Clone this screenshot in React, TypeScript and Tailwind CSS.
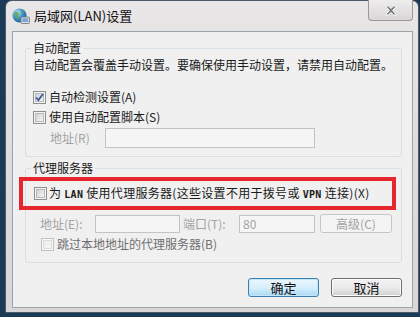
import React from "react";

function CheckBox({ checked, disabled }: { checked?: boolean; disabled?: boolean }) {
  return (
    <span
      className={`flex h-[13px] w-[13px] shrink-0 items-center justify-center border ${
        disabled ? "border-[#c2c2c2] bg-[#f7f7f7]" : "border-[#8e8f8f] bg-[#f4f4f4]"
      }`}
    >
      <span
        className={`flex h-[9px] w-[9px] items-center justify-center border bg-gradient-to-br ${
          disabled
            ? "border-[#dcdcdc] from-[#ebebeb] to-[#f7f7f7]"
            : "border-[#b9b9b9] from-[#d2d2d2] to-[#f5f5f5]"
        }`}
      >
        {checked && (
          <svg width="9" height="9" viewBox="0 0 9 9" className="overflow-visible">
            <path d="M1 4.5 L3.4 7 L8 1" fill="none" stroke="#3a5a9c" strokeWidth="1.8" />
          </svg>
        )}
      </span>
    </span>
  );
}

function Field({ w, h, value }: { w: string; h: string; value?: string }) {
  return (
    <div
      className={`${w} ${h} flex items-center border border-[#c3c3c3] bg-[#f5f5f5] pl-[3px] text-[12px] text-[#a3a3a3]`}
    >
      {value}
    </div>
  );
}

function LanIcon() {
  return (
    <svg width="18" height="17" viewBox="0 0 18 17">
      <defs>
        <radialGradient id="globe" cx="35%" cy="30%" r="75%">
          <stop offset="0%" stopColor="#bfe4f7" />
          <stop offset="55%" stopColor="#3b8ec4" />
          <stop offset="100%" stopColor="#1f5f8e" />
        </radialGradient>
      </defs>
      <circle cx="7.5" cy="7.5" r="7" fill="url(#globe)" />
      <path d="M3 4 Q6 3 7 6 Q5 8 6 11 Q3 10 2.5 7 Z" fill="#5aa543" opacity="0.85" />
      <path d="M9 2 Q12 3 12.5 5 Q10.5 5.5 9.5 4 Z" fill="#5aa543" opacity="0.85" />
      <rect x="9" y="9" width="8.5" height="6.5" rx="0.8" fill="#d9dde2" stroke="#6b7683" strokeWidth="0.8" />
      <rect x="10.3" y="10.2" width="5.9" height="3.8" fill="#7fa9cc" />
    </svg>
  );
}

export default function App() {
  return (
    <div className="h-[317px] w-[420px] overflow-hidden bg-[#1c3956] font-['Noto_Sans_CJK_SC',sans-serif] text-[12px] leading-[14px] text-[#1a1a1a]">
      {/* window */}
      <div className="ml-[5px] flex h-[313px] w-[414px] flex-col rounded-t-[7px] border border-[#4a5b6c] bg-gradient-to-b from-[#e9e6e7] via-[#e0dcdd] to-[#dad6d7]">
        {/* title bar */}
        <div className="flex h-[30px] items-center pl-[6px] pr-[5px]">
          <LanIcon />
          <span className="ml-[4px] text-[13px] text-[#111]">局域网(LAN)设置</span>
          <div className="-mt-[1px] ml-auto flex h-[21px] w-[45px] items-center justify-center self-start rounded-b-[4px] border border-t-0 border-[#9a9898] bg-gradient-to-b from-[#eeeced] to-[#d9d6d7]">
            <svg width="14" height="11" viewBox="0 0 14 11">
              <path
                d="M1.5 1 H4.5 L7 3.6 L9.5 1 H12.5 L8.6 5.5 L12.5 10 H9.5 L7 7.4 L4.5 10 H1.5 L5.4 5.5 Z"
                fill="#7a7a7a"
                stroke="#fbfbfb"
                strokeWidth="1"
                strokeLinejoin="round"
              />
            </svg>
          </div>
        </div>

        {/* client area */}
        <div className="ml-[6px] mr-[5px] flex h-[277px] flex-col border border-[#9ba3ab] bg-[#f0f0f0]">
          {/* 自动配置 */}
          <fieldset className="ml-[12px] mr-[10px] mt-[10px] rounded-[3px] border border-[#d5dfe5] px-[7px] pb-[8px]">
            <legend className="-ml-[2px] px-[2px] leading-[12px]">自动配置</legend>
            <div className="mt-[4px] whitespace-nowrap">
              自动配置会覆盖手动设置。要确保使用手动设置，请禁用自动配置。
            </div>
            <label className="mt-[18px] flex h-[14px] items-center gap-[3px]">
              <CheckBox checked />
              <span>自动检测设置(A)</span>
            </label>
            <label className="mt-[6px] flex h-[14px] items-center gap-[3px]">
              <CheckBox />
              <span>使用自动配置脚本(S)</span>
            </label>
            <div className="mt-[4px] flex h-[20px] items-center">
              <span className="ml-[17px] w-[55px] text-[#a3a3a3]">地址(R)</span>
              <Field w="w-[210px]" h="h-[20px]" />
            </div>
          </fieldset>

          {/* 代理服务器 */}
          <fieldset className="ml-[12px] mr-[10px] mt-[5px] rounded-[3px] border border-[#d5dfe5] px-[7px] pb-[11px]">
            <legend className="-ml-[2px] px-[2px] leading-[12px]">代理服务器</legend>
            <label className="-ml-[14px] -mr-[2px] mt-[3px] flex h-[33px] items-center gap-[2px] border-4 border-[#e5262d] pl-[11px]">
              <CheckBox />
              <span className="whitespace-nowrap tracking-[0.3px]">
                为 <span className="font-['DejaVu_Sans_Mono',monospace] text-[10px] font-bold">LAN</span> 使用代理服务器(这些设置不用于拨号或{" "}
                <span className="font-['DejaVu_Sans_Mono',monospace] text-[10px] font-bold">VPN</span> 连接)(X)
              </span>
            </label>
            <div className="mt-[4px] flex h-[19px] items-center">
              <span className="ml-[7px] w-[55px] text-[#a3a3a3]">地址(E):</span>
              <Field w="w-[85px]" h="h-[18px]" />
              <span className="ml-[3px] w-[56px] text-[#a3a3a3]">端口(T):</span>
              <Field w="w-[76px]" h="h-[18px]" value="80" />
              <div className="ml-[5px] flex h-[19px] w-[72px] items-center justify-center rounded-[3px] border border-[#c5c5c5] bg-[#f4f4f4] text-[#a3a3a3]">
                高级(C)
              </div>
            </div>
            <label className="ml-[8px] mt-[4px] flex h-[14px] items-center gap-[3px]">
              <CheckBox disabled />
              <span className="text-[#6f6f6f]">跳过本地地址的代理服务器(B)</span>
            </label>
          </fieldset>

          {/* buttons */}
          <div className="mr-[10px] mt-[15px] flex justify-end gap-[12px]">
            <button className="flex h-[19px] w-[71px] items-center justify-center rounded-[3px] border border-[#3c7fb1] bg-gradient-to-b from-[#eaf6fd] via-[#d9f0fc] to-[#a7d9f5] text-[13px] text-[#111] shadow-[inset_0_0_0_1px_#c2e6fa]">
              确定
            </button>
            <button className="flex h-[19px] w-[71px] items-center justify-center rounded-[3px] border border-[#707070] bg-gradient-to-b from-[#f2f2f2] via-[#ebebeb] to-[#cfcfcf] text-[13px] text-[#111] shadow-[inset_0_0_0_1px_#fcfcfc]">
              取消
            </button>
          </div>
        </div>
      </div>
    </div>
  );
}
